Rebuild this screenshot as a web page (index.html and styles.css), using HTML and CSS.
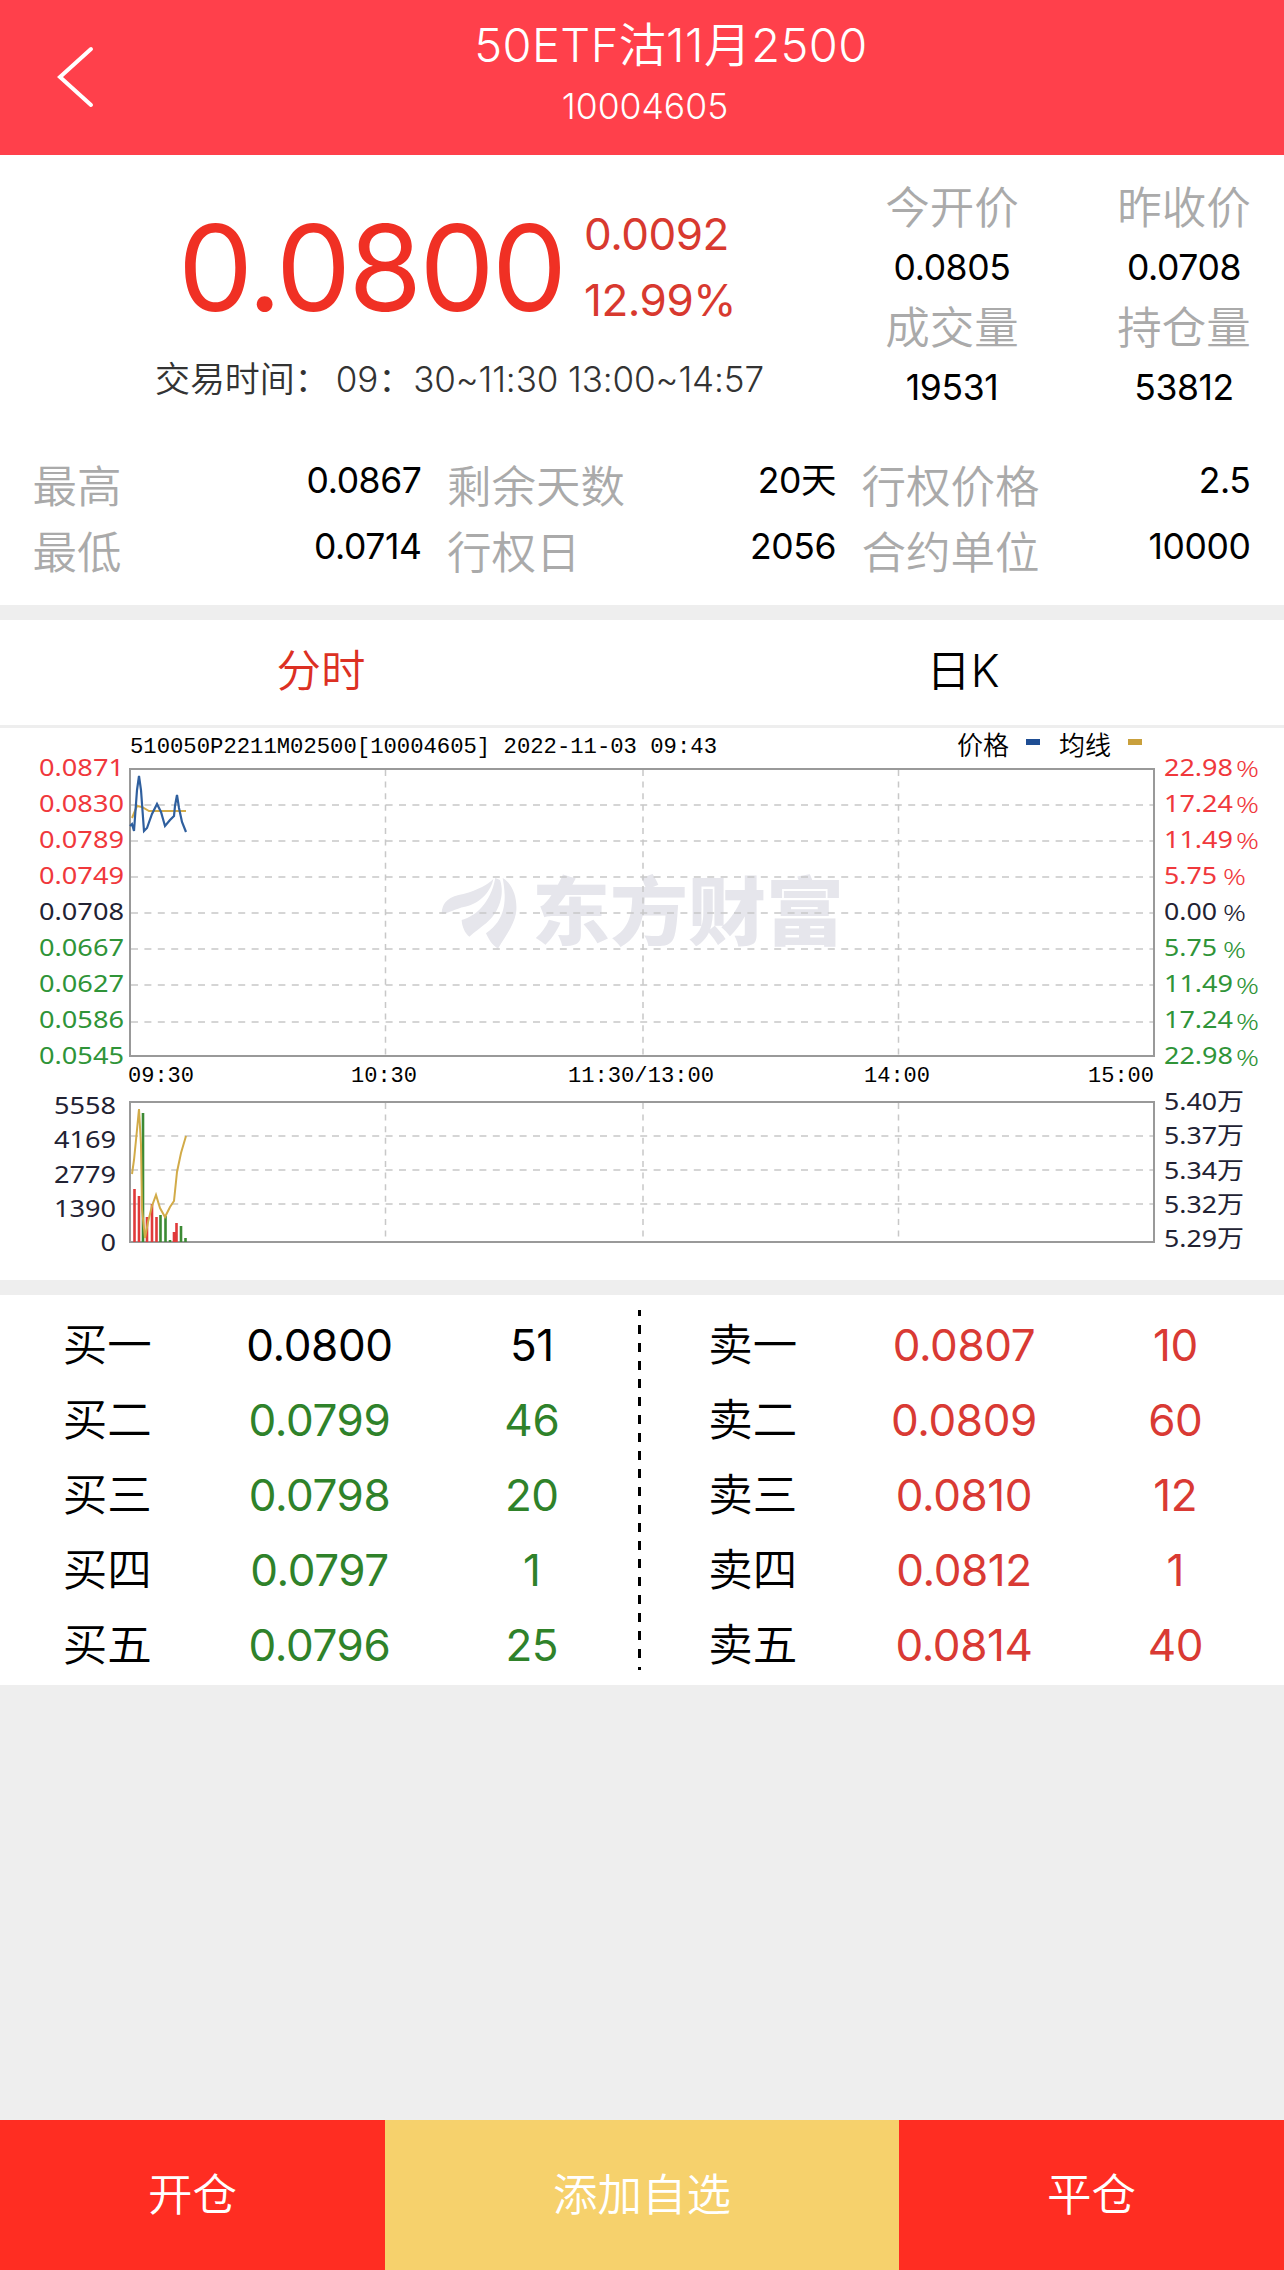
FILE: index.html
```html
<!doctype html>
<html lang="zh-CN">
<head>
    <meta charset="utf-8">
    <meta name="viewport" content="width=device-width, initial-scale=1">
    <title>50ETF沽11月2500</title>
    <link rel="stylesheet" href="styles.css">
</head>
<body>

<header class="header">
    <svg class="back" viewBox="0 0 40 62" aria-label="返回">
        <path d="M36 3L5 31l31 28"/>
    </svg>
    <h1 class="title">50ETF沽11月2500</h1>
    <div class="code">10004605</div>
</header>

<main>
    <section class="quote">
        <div class="summary">
            <div class="latest">
                <div class="price">0.0800</div>
                <div class="change">
                    <div>0.0092</div>
                    <div>12.99%</div>
                </div>
                <div class="hours">交易时间：&thinsp;09：30~11:30 13:00~14:57</div>
            </div>
            <dl class="stats">
                <div><dt>今开价</dt><dd>0.0805</dd></div>
                <div><dt>昨收价</dt><dd>0.0708</dd></div>
                <div><dt>成交量</dt><dd>19531</dd></div>
                <div><dt>持仓量</dt><dd>53812</dd></div>
            </dl>
        </div>
        <dl class="details">
            <div><dt>最高</dt><dd>0.0867</dd></div>
            <div><dt>剩余天数</dt><dd>20天</dd></div>
            <div><dt>行权价格</dt><dd>2.5</dd></div>
            <div><dt>最低</dt><dd>0.0714</dd></div>
            <div><dt>行权日</dt><dd>2056</dd></div>
            <div><dt>合约单位</dt><dd>10000</dd></div>
        </dl>
    </section>

    <section class="trend">
        <nav class="tabs">
            <a class="tab active">分时</a>
            <a class="tab">日K</a>
        </nav>
        <svg class="chart" viewBox="0 728 1284 552">
            <!-- watermark -->
            <g class="watermark">
                <g transform="translate(420 720) scale(.3333)">
                    <path d="M65 582C65 545 90 528 130 522C175 510 205 492 220 477C214 510 184 550 135 560C105 566 85 580 65 582z"/>
                    <path d="M125 600C165 590 212 550 226 474L240 480C256 525 235 580 200 608C182 622 165 635 148 650C135 640 126 620 125 600z"/>
                    <path d="M248 474C280 492 294 540 288 580C280 620 255 650 234 686C215 675 205 655 198 640C226 620 256 590 254 525C253 505 251 490 248 474z"/>
                </g>
                <text x="532" y="939" textLength="312" lengthAdjust="spacingAndGlyphs">东方财富</text>
            </g>

            <!-- grid -->
            <path class="grid-h" d="M131 805H1154M131 841H1154M131 877H1154M131 913H1154M131 949H1154M131 985H1154M131 1022H1154M131 1136H1154M131 1170H1154M131 1204H1154"/>
            <path class="grid-v" d="M385.5 770V1056M643 770V1056M898.5 770V1056M385.5 1103V1242M643 1103V1242M898.5 1103V1242"/>
            <rect class="frame" x="130" y="769" width="1024" height="287"/>
            <rect class="frame" x="130" y="1102" width="1024" height="140"/>

            <!-- price -->
            <polyline class="avg" points="132,818 137,806 142,807 149,811 186,811"/>
            <polyline class="line" points="130,826 132,824 134,831 137,790 139,776 141,790 144,831 147,828 152,814 157,804 161,812 165,826 170,820 174,816 175,806 177,795 179,808 182,822 186,832"/>

            <!-- volume -->
            <path class="bar-up" d="M134.5 1242V1189M139 1242V1196M147 1242V1217M152 1242V1204M156.500 1242V1217M174 1242V1232M176.500 1242V1223"/>
            <path class="bar-down" d="M143 1242V1113M160.500 1242V1215M165.500 1242V1216M170 1242V1240M181 1242V1226M185.500 1242V1238"/>
            <polyline class="hold" points="132,1174 134,1160 136,1140 139,1109 141,1145 142,1209 145,1238 148,1222 152,1206 156,1195 160,1208 165,1217 170,1207 174,1201 177,1172 181,1153 186,1136"/>

            <!-- caption -->
            <g class="mono">
                <text x="130" y="753" textLength="587" lengthAdjust="spacingAndGlyphs">510050P2211M02500[10004605] 2022-11-03 09:43</text>
                <text x="128" y="1082" textLength="66" lengthAdjust="spacingAndGlyphs">09:30</text>
                <text x="351" y="1082" textLength="66" lengthAdjust="spacingAndGlyphs">10:30</text>
                <text x="568" y="1082" textLength="146" lengthAdjust="spacingAndGlyphs">11:30/13:00</text>
                <text x="864" y="1082" textLength="66" lengthAdjust="spacingAndGlyphs">14:00</text>
                <text x="1088" y="1082" textLength="66" lengthAdjust="spacingAndGlyphs">15:00</text>
            </g>
            <g class="legend">
                <text x="957" y="755">价格</text>
                <rect x="1026" y="739" width="14" height="6" fill="#1f4e94"/>
                <text x="1059" y="755">均线</text>
                <rect x="1128" y="739" width="14" height="6" fill="#c9a03c"/>
            </g>

            <!-- left axis -->
            <g class="axis left"></g>
            <!-- right axis -->
            <g class="axis right"></g>
        </svg>
    </section>

    <section class="book">
        <table class="side buy">
            <tr><th>买一</th><td class="flat">0.0800</td><td class="flat">51</td></tr>
            <tr><th>买二</th><td>0.0799</td><td>46</td></tr>
            <tr><th>买三</th><td>0.0798</td><td>20</td></tr>
            <tr><th>买四</th><td>0.0797</td><td>1</td></tr>
            <tr><th>买五</th><td>0.0796</td><td>25</td></tr>
        </table>
        <div class="divider"></div>
        <table class="side sell">
            <tr><th>卖一</th><td>0.0807</td><td>10</td></tr>
            <tr><th>卖二</th><td>0.0809</td><td>60</td></tr>
            <tr><th>卖三</th><td>0.0810</td><td>12</td></tr>
            <tr><th>卖四</th><td>0.0812</td><td>1</td></tr>
            <tr><th>卖五</th><td>0.0814</td><td>40</td></tr>
        </table>
    </section>
</main>

<footer class="actions">
    <a class="action">开仓</a>
    <a class="action favorite">添加自选</a>
    <a class="action">平仓</a>
</footer>

<script>
  (() => {
    const NS = 'http://www.w3.org/2000/svg';
    const left = document.querySelector('.axis.left');
    const right = document.querySelector('.axis.right');

    const label = (parent, text, x, y, width, cls) => {
      const el = document.createElementNS(NS, 'text');
      el.textContent = text;
      el.setAttribute('x', x);
      el.setAttribute('y', y);
      el.setAttribute('textLength', width);
      el.setAttribute('lengthAdjust', 'spacingAndGlyphs');
      if (cls) {
        el.setAttribute('class', cls);
      }
      parent.appendChild(el);
    };

    const prices = ['0.0871', '0.0830', '0.0789', '0.0749', '0.0708', '0.0667', '0.0627', '0.0586', '0.0545'];
    const rates = ['22.98', '17.24', '11.49', '5.75', '0.00', '5.75', '11.49', '17.24', '22.98'];
    const volumes = ['5558', '4169', '2779', '1390', '0'];
    const holds = ['5.40', '5.37', '5.34', '5.32', '5.29'];

    prices.forEach((price, i) => {
      const cls = i < 4 ? 'up' : (i > 4 ? 'down' : '');
      const y = 775.5 + i * 36.1;
      const wide = rates[i].length === 5;
      label(left, price, 39, y, 85, cls);
      label(right, rates[i], 1164, y, wide ? 69 : 53, cls);
      label(right, '%', wide ? 1236 : 1223, y + 1.5, 23, cls + ' percent');
    });

    volumes.forEach((volume, i) => {
      const width = volume.length * 15.5;
      label(left, volume, 116 - width, 1114 + i * 34.25, width);
      label(right, holds[i], 1164, 1110 + i * 34.25, 53);
      label(right, '万', 1217, 1110 + i * 34.25, 27);
    });
  })();
</script>
</body>
</html>
```
FILE: styles.css
```css
*, *:before, *:after {
    box-sizing: border-box;
    margin: 0;
    padding: 0;
}

body {
    font-family: Inter, "Noto Sans CJK SC", sans-serif;
    font-size: 44.5px;
    font-weight: 350;
    display: flex;
    flex-direction: column;
    min-height: 100vh;
    background: #eee;
    color: #000;
}

.header {
    position: relative;
    height: 155px;
    padding-top: 15px;
    background: #ff404b;
    color: #fff;
    text-align: center;
}

.back {
    position: absolute;
    left: 55px;
    top: 46px;
    width: 40px;
    height: 62px;
    fill: none;
    stroke: #fff;
    stroke-width: 4;
    stroke-linecap: round;
}

.title {
    padding-left: 58px;
    font-size: 47px;
    font-weight: 350;
    letter-spacing: .4px;
    line-height: 60px;
}

.code {
    padding-left: 6px;
    font-size: 35.5px;
    line-height: 63px;
}

.quote {
    height: 450px;
    padding-top: 23px;
    background: #fff;
}

.summary {
    display: flex;
    height: 276px;
}

.latest {
    display: grid;
    grid-template-columns: 406px 1fr;
    align-content: start;
    width: 836px;
    padding-left: 178px;
    color: #d8392f;
}

.price {
    font-size: 119px;
    font-weight: 400;
    line-height: 181px;
    letter-spacing: -2.6px;
    color: #f03024;
}

.change {
    padding-top: 23px;
    line-height: 66px;
    font-size: 44px;
    font-weight: 400;
    letter-spacing: -.5px;
}

.hours {
    grid-column: 1 / 3;
    margin-left: -23px;
    font-size: 35px;
    line-height: 40px;
    letter-spacing: -.1px;
    white-space: nowrap;
    color: #333;
}

.stats {
    display: grid;
    grid-template-columns: 232px 200px;
    grid-auto-rows: 120px;
    column-gap: 16px;
    text-align: center;
    line-height: 60px;
}

dt {
    color: #aaa;
}

dd {
    font-size: 35.5px;
    font-weight: 400;
    letter-spacing: -.4px;
}

.details {
    display: grid;
    grid-template-columns: repeat(3, 389px);
    column-gap: 25.5px;
    padding-left: 32.5px;
    line-height: 66px;
}

.details div {
    display: flex;
    justify-content: space-between;
}

.details dd {
    line-height: 54px;
}

.trend {
    margin-top: 15px;
    background: #fff;
}

.tabs {
    display: flex;
    height: 108px;
    border-bottom: 3px solid #eee;
    line-height: 102px;
    text-align: center;
}

.tab {
    flex: 1;
}

.tab.active {
    color: #dc3023;
}

.chart {
    display: block;
    width: 1284px;
    height: 552px;
}

.watermark {
    fill: #e6e6ec;
    font-size: 74px;
    font-weight: 900;
}

.frame,
.grid-h,
.grid-v,
.line,
.avg,
.hold {
    fill: none;
}

.frame {
    stroke: #999;
    stroke-width: 2;
}

.grid-h,
.grid-v {
    stroke: #c8c8c8;
    stroke-width: 1.5;
    stroke-dasharray: 7 6.4;
}

.grid-v {
    stroke-dasharray: 6 5.6;
}

.line {
    stroke: #2f5f9e;
    stroke-width: 2.2;
}

.avg,
.hold {
    stroke: #d2ab48;
    stroke-width: 2;
}

.bar-up,
.bar-down {
    stroke: #e03a3a;
    stroke-width: 2.6;
}

.bar-down {
    stroke: #3c8a34;
}

.mono {
    font-family: "Liberation Mono", monospace;
    font-size: 22.5px;
}

.legend {
    font-size: 26px;
}

.axis {
    font-family: "Noto Sans", "Noto Sans CJK SC", sans-serif;
    font-size: 24px;
    font-weight: 400;
    fill: #223;
}

.axis .up {
    fill: #f0383c;
}

.axis .down {
    fill: #2f9438;
}

.axis .percent {
    font-weight: 300;
    font-size: 22px;
}

.book {
    display: flex;
    height: 390px;
    margin-top: 15px;
    padding-top: 13px;
    background: #fff;
}

.side {
    table-layout: fixed;
    width: 637px;
    height: 375px;
    border-collapse: collapse;
    text-align: center;
}

.side tr {
    height: 75px;
}

.side th,
.side td {
    width: 33.33%;
    line-height: 75px;
    font-weight: 350;
}

.side td {
    font-size: 44px;
    font-weight: 400;
    letter-spacing: -.4px;
}

.buy {
    margin-left: 1px;
}

.buy td {
    color: #2f822a;
}

.buy .flat {
    color: #000;
}

.sell {
    width: 634px;
    margin-left: 6px;
}

.sell td {
    color: #d93a34;
}

.divider {
    width: 3px;
    height: 360px;
    margin-top: 2px;
    background: repeating-linear-gradient(#000 0 6px, transparent 6px 15px, #000 15px 18px);
}

.actions {
    display: flex;
    height: 150px;
    margin-top: auto;
    line-height: 150px;
    text-align: center;
    color: #fff;
}

.action {
    flex: 3;
    background: #ff2d22;
}

.action.favorite {
    flex: 4;
    background: #f6d16c;
}
```
